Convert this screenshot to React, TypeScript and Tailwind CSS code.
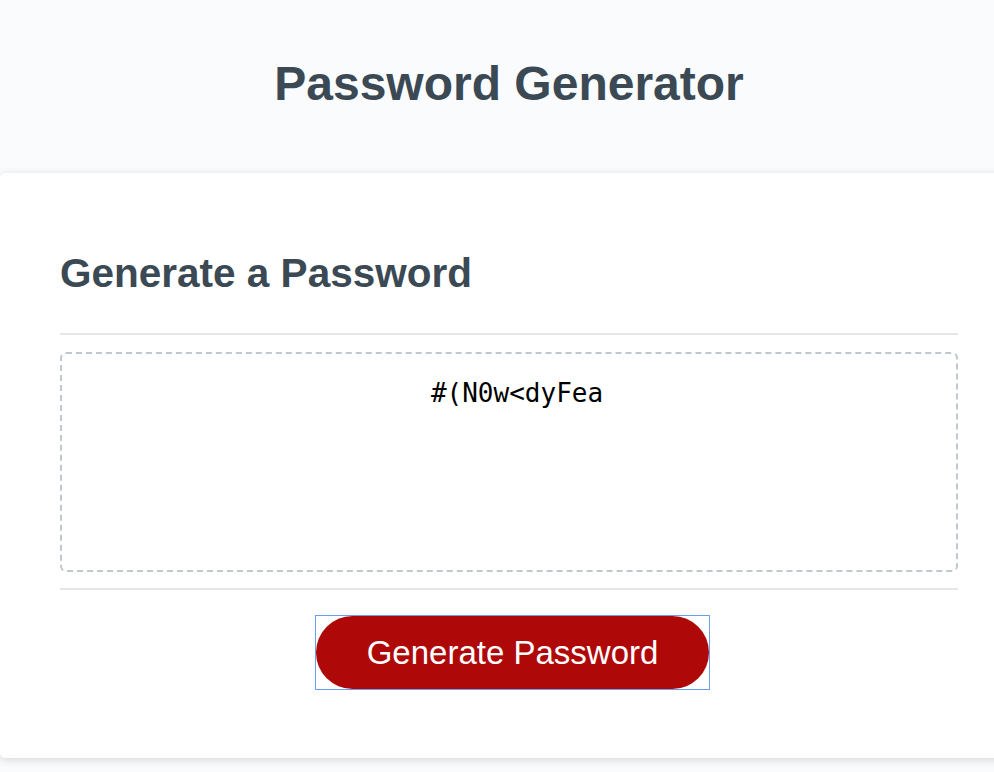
import React from 'react';

const App: React.FC = () => {
  const password = '#(N0w<dyFea';

  return (
    <div className="w-full h-[772px] overflow-hidden bg-[#f9fbfd]">
      <div className="w-[1018px] text-[#3b4954] font-['Liberation_Sans',Arial,sans-serif]">
        <header className="h-[172px] flex items-center justify-center pb-[4px]">
          <h1 className="text-[48px] font-bold leading-[1.15]">Password Generator</h1>
        </header>

        <div className="mt-px bg-white rounded-[5px] shadow-[0_2px_8px_0_rgba(0,0,0,0.15)] px-[60px] pt-[77px] pb-[68px]">
          <h2 className="text-[40.5px] font-bold leading-[46px]">Generate a Password</h2>

          <div className="mt-[37px] h-[2px] bg-[#e6e6e6]" />

          <div className="mt-[17px] h-[220px] border-2 border-dashed border-[#c0c7cf] rounded-[6px] pt-[24px] pl-[16px] text-center">
            <span className="text-[26px] leading-[30px] text-black font-['DejaVu_Sans_Mono',monospace]">
              {password}
            </span>
          </div>

          <div className="mt-[16px] h-[2px] bg-[#e6e6e6]" />

          <div className="mt-[25px] flex justify-center">
            <span className="ml-[7px] border border-[#6c9ef0]">
              <button className="h-[73px] px-[51px] rounded-full bg-[#af0808] text-white text-[33px] leading-none">
                Generate Password
              </button>
            </span>
          </div>
        </div>
      </div>
    </div>
  );
};

export default App;
